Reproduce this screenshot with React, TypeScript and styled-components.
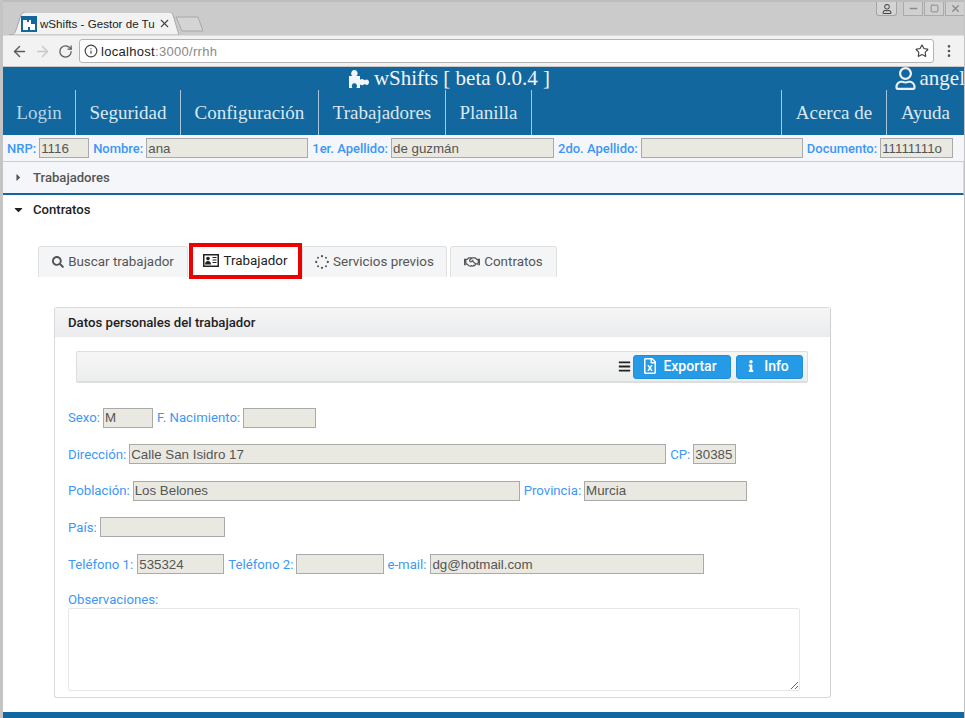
import React from 'react';
import styled, { createGlobalStyle } from 'styled-components';
import { ArrowLeft, ArrowRight, RotateCw, Info as InfoCircle, Star, MoreVertical, X, Minus, Square } from 'lucide-react';
import { FaRegUser, FaSearch, FaRegHandshake, FaBars, FaInfo, FaRegFileExcel, FaCaretRight, FaCaretDown } from 'react-icons/fa';

const Global = createGlobalStyle`
  html, body { margin: 0; padding: 0; background: #fff; }
  body { width: 965px; height: 718px; overflow: hidden; font-family: Roboto, "Liberation Sans", sans-serif; }
  * { box-sizing: border-box; }
`;

const Window = styled.div`
  width: 965px; height: 718px; display: flex; flex-direction: column; overflow: hidden;
  background: #fff; border-left: 3px solid #c4c4c4; border-right: 1px solid #c4c4c4;
`;
const TabStrip = styled.div`
  height: 35px; flex: none; margin-left: -3px; margin-right: -1px; background: #cbcbcb; border-top: 2px solid #bdbdbd;
  display: flex; align-items: flex-end; padding-left: 9px; position: relative;
`;
const BrowserTab = styled.div`
  width: 170px; height: 23px; position: relative; display: flex; align-items: center; padding: 0 13px 0 12px; gap: 3px;
  font: 11.6px "Liberation Sans", sans-serif; color: #222;
  svg.shape { position: absolute; left: 0; top: 0; }
`;
const Favicon = styled.svg` flex: none; position: relative; `;
const TabTitle = styled.span` position: relative; flex: 1; white-space: nowrap; `;
const TabClose = styled(X)` position: relative; flex: none; color: #444; `;
const NewTab = styled.svg` margin-left: -4px; margin-bottom: 3px; position: relative; `;
const WinButtons = styled.div`
  margin-left: auto; align-self: flex-start; display: flex; height: 14px; margin-right: 0;
`;
const UserBtn = styled.div`
  width: 21px; height: 14px; border: 1px solid #a5a5a5; border-top: none; border-radius: 0 0 3px 3px; margin-right: 5px;
  display: flex; align-items: center; justify-content: center; color: #444; background: #d4d4d4;
`;
const WinBtn = styled.div`
  width: 20px; height: 14px; border: 1px solid #aaa; border-top: none; margin-left: 1px; color: #8a8a8a;
  display: flex; align-items: center; justify-content: center; background: #d0d0d0;
`;
const Toolbar = styled.div`
  height: 31px; flex: none; background: #f2f2f2; display: flex; align-items: center; padding: 0 8px 0 8px; margin-left: -3px; margin-right: -1px;
  border-left: 1px solid #aaa; border-top: 1px solid #ddd;
`;
const NavIcon = styled.span<{ $off?: boolean }>`
  width: 21px; margin-right: 2px; display: flex; justify-content: center; color: ${p => p.$off ? '#c8c8c8' : '#5a5a5a'};
`;
const Omnibox = styled.div`
  width: 855px; height: 24px; margin-left: 1px; background: #fff; border: 1px solid #b4b4b4; border-radius: 3px;
  display: flex; align-items: center; padding: 0 4px 0 4px; font: 13px "Liberation Sans", sans-serif; color: #222; gap: 3px;
  em { font-style: normal; color: #888; }
`;
const OmniText = styled.span` flex: 1; letter-spacing: .3px;`;
const Dots = styled(MoreVertical)` margin-left: 7px; color: #555; `;

const Header = styled.header` background: #12679f; flex: none; height: 69px; display: flex; flex-direction: column; color: #fff; border-top: 1px solid #c9c9c9;`;
const TitleRow = styled.div`
  height: 23px; display: flex; justify-content: center; align-items: center; position: relative;
  font: 21px "Liberation Serif", serif; color: #f2f6fa; gap: 5px; padding-right: 68px;
`;
const UserBadge = styled.div`
  position: absolute; right: -1px; top: -1px; display: flex; align-items: center; gap: 3px;
  font: 21px "Liberation Serif", serif; color: #eaf2f8;
`;
const Nav = styled.nav` height: 45px; display: flex; font: 19px "Liberation Serif", serif; `;
const NavItem = styled.div<{ $w: number; $dim?: boolean }>`
  width: ${p => p.$w}px; display: flex; align-items: center; justify-content: center; flex: none;
  border-right: 1px solid #a9c7dc; color: ${p => p.$dim ? '#b5d6ea' : '#dbe9f2'};
`;
const NavSpacer = styled.div` flex: 1; border-right: 1px solid #a9c7dc; `;
const NavLast = styled.div`
  width: 77px; flex: none; display: flex; align-items: center; justify-content: center; color: #dbe9f2;
`;

const InfoBar = styled.div`
  height: 27px; flex: none; background: #f4f6f9; display: flex; align-items: center; padding-left: 4px; gap: 3px;
  border-bottom: 1px solid #bcd1e0;
`;
const Label = styled.label<{ $ml?: number; $mr?: number }>`
  font: 13.2px Roboto, sans-serif; color: #3d97f6; white-space: nowrap; margin-left: ${p => p.$ml ?? 0}px; margin-right: ${p => p.$mr ?? 0}px;
`;
const BoldLabel = styled(Label)` font-size: 13px; font-weight: 500; `;
const Field = styled.input<{ $w: number }>`
  width: ${p => p.$w}px; height: 20px; background: #eae9e1; border: 1px solid #aaaaaa; padding: 0 0 0 1px;
  font: 13.33px "Liberation Sans", sans-serif; color: #555; outline: none; flex: none; border-radius: 0;
`;
const AccHead = styled.div<{ $open?: boolean }>`
  flex: none; display: flex; align-items: center; font: 500 13.1px Roboto, sans-serif; padding-left: 5px; gap: 4px;
  ${p => p.$open
    ? 'height: 31px; background: #fff; color: #222; padding-bottom: 2px;'
    : 'height: 33px; background: #f4f6f9; color: #555; border-bottom: 2px solid #12679f; border-right: 1px solid #cfdbe5; padding-bottom: 1px;'}
`;
const CaretSlot = styled.span` width: 21px; display: flex; justify-content: center; `;
const Content = styled.div` flex: 1; display: flex; flex-direction: column; padding: 15px 0 0 35px; min-height: 0; `;
const Tabs = styled.div` display: flex; align-items: flex-end; height: 36px; flex: none; `;
const TabBtn = styled.div<{ $w: number; $ml?: number; $active?: boolean }>`
  width: ${p => p.$w}px; height: ${p => p.$active ? 36 : 31}px; margin-left: ${p => p.$ml ?? 0}px; display: flex; align-items: center; justify-content: center; gap: 4px;
  font: 13.4px Roboto, sans-serif; margin-bottom: ${p => p.$active ? -2 : 0}px; flex: none;
  ${p => p.$active
    ? 'border: 4px solid #ee0000; background: #fff; color: #222; padding-bottom: 1px;'
    : 'background: #f4f5f7; border: 1px solid #e0e0e0; border-bottom: none; border-radius: 3px 3px 0 0; color: #555; padding-bottom: 1px;'}
`;
const Panel = styled.section`
  width: 777px; margin: 30px 0 0 16px; height: 391px; flex: none; border: 1px solid #d9d9d9; border-right-color: #cfcfcf; border-radius: 3px;
  display: flex; flex-direction: column;
`;
const PanelHead = styled.div`
  height: 29px; flex: none; background: linear-gradient(#f5f5f6, #ebecee); display: flex; align-items: center; padding-left: 13px;
  font: 500 13.2px Roboto, sans-serif; color: #222;
`;
const PanelBody = styled.div` flex: 1; padding: 14px 0 0 13px; display: flex; flex-direction: column; `;
const ActionBar = styled.div`
  width: 732px; height: 32px; margin-left: 8px; border: 1px solid #dedede; border-bottom-width: 2px; border-radius: 2px; background: linear-gradient(#f6f6f7, #eceded);
  display: flex; justify-content: flex-end; align-items: center; padding-right: 4px; flex: none;
`;
const Burger = styled(FaBars)` color: #222; margin-right: 2px; `;
const ActionBtn = styled.button<{ $w: number; $ml?: number; $gap?: number }>`
  width: ${p => p.$w}px; height: 24px; margin-left: ${p => p.$ml ?? 0}px; background: #259ae6; color: #fff; border: 1px solid #2290d8; border-radius: 3px;
  font: 500 14px Roboto, sans-serif; display: flex; align-items: center; justify-content: center; gap: ${p => p.$gap ?? 5}px; padding: 0 5px 2px 0; flex: none;
`;
const FormRows = styled.div` display: flex; flex-direction: column; margin-top: 24px; gap: 15.67px; `;
const Row = styled.div` display: flex; align-items: center; height: 21px; gap: 3px; `;
const ObsLabel = styled(Label)` display: block; margin-top: 17px; line-height: 16px; `;
const Notes = styled.textarea`
  display: block; width: 732px; height: 83px; margin-top: 0; border: 1px solid #e6e6e6; border-radius: 2px; background: #fff; outline: none; resize: both;
`;
const FootBar = styled.div` height: 6px; flex: none; background: #12679f; `;

const Spinner = () => (
  <svg width="14" height="14" viewBox="0 0 14 14" fill="#555">
    {[[7,1.2],[11,2.8],[12.8,7],[11,11.2],[7,12.8],[3,11.2],[1.2,7],[3,2.8]].map(([x,y],i)=><circle key={i} cx={x} cy={y} r={i%2?1:1.15}/>)}
  </svg>
);
const Puzzle = () => (
  <svg width="20" height="18" viewBox="0 0 20 18" fill="#f2f6fa">
    <path d="M0 6H3.5C2.5 5.2 2.2 4.4 2.2 3.4 2.2 1.5 3.5 0 5.4 0S8.6 1.5 8.6 3.4C8.6 4.4 8.2 5.2 7.3 6H11V9.8C12 9 13 9 14 9.2L16 10.3C16.6 9.6 17.4 9.3 18 9.5 19.4 9.8 20 11 20 12.3 20 13.6 19.2 14.8 18 15 17.2 15 16.6 14.6 16 14L14 15C13 15.4 12 15.2 11 14.4V18H7.3C8 17 8.2 16 7.8 15 7.4 13.8 6.4 13.3 5.4 13.3S3.4 13.8 3 15C2.6 16 2.8 17 3.5 18H0Z" />
  </svg>
);
const IdCard = () => (
  <svg width="16" height="13" viewBox="0 0 16 13">
    <rect x=".75" y=".75" width="14.5" height="11.5" fill="#fff" stroke="#222" strokeWidth="1.5" />
    <circle cx="5" cy="4.6" r="1.8" fill="#222" />
    <path d="M2 10.5C2 8 3.3 7 5 7s3 1 3 3.5Z" fill="#222" />
    <path d="M9.5 3.5h4M9.5 6h4M9.5 8.5h4" stroke="#222" strokeWidth="1.1" />
  </svg>
);

export default function App() {
  return (
    <Window>
      <Global />
      <TabStrip>
        <BrowserTab>
          <svg className="shape" width="170" height="23" viewBox="0 0 170 23">
            <path d="M0 23 C5 23 6 21 7 18 L12 3 C13 1 14 0 17 0 H160 C162 0 163 1 164 3 L170 23 Z" fill="#f2f2f2" stroke="#a8a8a8" />
          </svg>
          <Favicon width="16" height="16" viewBox="0 0 16 16">
            <rect width="16" height="16" fill="#12679f" />
            <path d="M2 4h4v2h2V4h2v4h4v6H9v-3H7v3H2z" fill="#fff" />
          </Favicon>
          <TabTitle>wShifts - Gestor de Tu</TabTitle>
          <TabClose size={13} strokeWidth={2} />
        </BrowserTab>
        <NewTab width="30" height="16" viewBox="0 0 30 16">
          <path d="M1 1 H23 L28 15 H7 Z" fill="#d4d4d4" stroke="#a8a8a8" />
        </NewTab>
        <WinButtons>
          <UserBtn><FaRegUser size={10} /></UserBtn>
          <WinBtn><Minus size={11} strokeWidth={3} /></WinBtn>
          <WinBtn><Square size={9} strokeWidth={2.5} /></WinBtn>
          <WinBtn><X size={11} strokeWidth={3} /></WinBtn>
        </WinButtons>
      </TabStrip>
      <Toolbar>
        <NavIcon><ArrowLeft size={17} /></NavIcon>
        <NavIcon $off><ArrowRight size={17} /></NavIcon>
        <NavIcon><RotateCw size={15} /></NavIcon>
        <Omnibox>
          <InfoCircle size={14} color="#444" />
          <OmniText>localhost<em>:3000/rrhh</em></OmniText>
          <Star size={14} color="#444" />
        </Omnibox>
        <Dots size={16} />
      </Toolbar>
      <Header>
        <TitleRow>
          <Puzzle />
          <span>wShifts [ beta 0.0.4 ]</span>
          <UserBadge><FaRegUser size={23} />angel</UserBadge>
        </TitleRow>
        <Nav>
          <NavItem $w={73} $dim>Login</NavItem>
          <NavItem $w={105}>Seguridad</NavItem>
          <NavItem $w={138}>Configuración</NavItem>
          <NavItem $w={127}>Trabajadores</NavItem>
          <NavItem $w={86}>Planilla</NavItem>
          <NavSpacer />
          <NavItem $w={105}>Acerca de</NavItem>
          <NavLast>Ayuda</NavLast>
        </Nav>
      </Header>
      <InfoBar>
        <BoldLabel>NRP:</BoldLabel><Field $w={50} readOnly value="1116" />
        <BoldLabel $ml={1}>Nombre:</BoldLabel><Field $w={162} readOnly value="ana" />
        <BoldLabel $ml={1}>1er. Apellido:</BoldLabel><Field $w={163} readOnly value="de guzmán" />
        <BoldLabel $ml={1}>2do. Apellido:</BoldLabel><Field $w={162} readOnly value="" />
        <BoldLabel $ml={1}>Documento:</BoldLabel><Field $w={73} readOnly value="11111111o" />
      </InfoBar>
      <AccHead><CaretSlot><FaCaretRight size={11} /></CaretSlot>Trabajadores</AccHead>
      <AccHead $open><CaretSlot><FaCaretDown size={13} /></CaretSlot>Contratos</AccHead>
      <Content>
        <Tabs>
          <TabBtn $w={150}><FaSearch size={12} />Buscar trabajador</TabBtn>
          <TabBtn $w={113} $ml={1} $active><IdCard />Trabajador</TabBtn>
          <TabBtn $w={145}><Spinner />Servicios previos</TabBtn>
          <TabBtn $w={107} $ml={3}><FaRegHandshake size={16} />Contratos</TabBtn>
        </Tabs>
        <Panel>
          <PanelHead>Datos personales del trabajador</PanelHead>
          <PanelBody>
            <ActionBar>
              <Burger size={13} />
              <ActionBtn $w={98}><FaRegFileExcel size={16} />Exportar</ActionBtn>
              <ActionBtn $w={67} $ml={5} $gap={7}><FaInfo size={12} />Info</ActionBtn>
            </ActionBar>
            <FormRows>
              <Row>
                <Label>Sexo:</Label><Field $w={50} readOnly value="M" />
                <Label $ml={1}>F. Nacimiento:</Label><Field $w={73} readOnly value="" />
              </Row>
              <Row>
                <Label>Dirección:</Label><Field $w={537} readOnly value="Calle San Isidro 17" />
                <Label $ml={1}>CP:</Label><Field $w={43} readOnly value="30385" />
              </Row>
              <Row>
                <Label>Población:</Label><Field $w={387} readOnly value="Los Belones" />
                <Label $ml={1}>Provincia:</Label><Field $w={163} readOnly value="Murcia" />
              </Row>
              <Row>
                <Label>País:</Label><Field $w={125} readOnly value="" />
              </Row>
              <Row>
                <Label $mr={1}>Teléfono 1:</Label><Field $w={87} readOnly value="535324" />
                <Label $ml={1}>Teléfono 2:</Label><Field $w={88} readOnly value="" />
                <Label $mr={1}>e-mail:</Label><Field $w={274} readOnly value="dg@hotmail.com" />
              </Row>
            </FormRows>
            <ObsLabel>Observaciones:</ObsLabel>
            <Notes readOnly />
          </PanelBody>
        </Panel>
      </Content>
      <FootBar />
    </Window>
  );
}
